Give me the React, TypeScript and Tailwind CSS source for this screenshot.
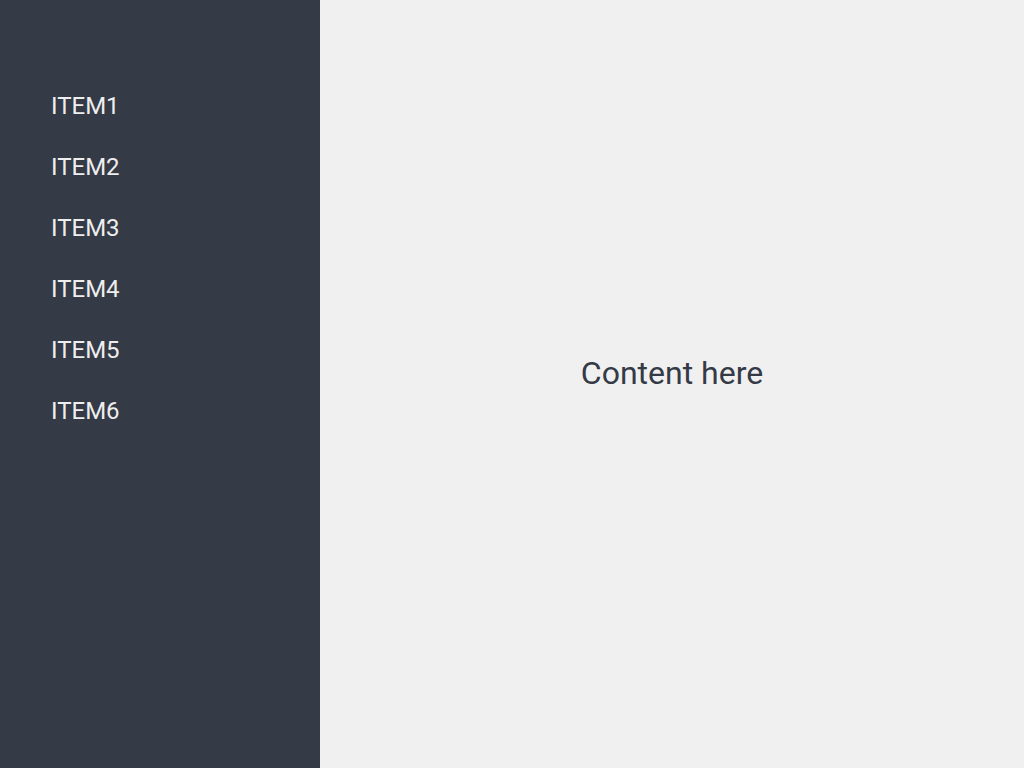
export default function App() {
  const items = ["ITEM1", "ITEM2", "ITEM3", "ITEM4", "ITEM5", "ITEM6"];
  return (
    <div className="flex w-full h-screen font-['Roboto',sans-serif]">
      <aside className="w-[320px] shrink-0 bg-[#343a46] pt-[75px] pl-[51px]">
        <ul className="flex flex-col">
          {items.map((item) => (
            <li key={item} className="h-[61px] flex items-center text-[24px] text-[#eeeeee]">
              {item}
            </li>
          ))}
        </ul>
      </aside>
      <main className="flex-1 bg-[#f0f0f0] flex items-center justify-center">
        <p className="text-[32px] text-[#343a46] -mt-[22px]">Content here</p>
      </main>
    </div>
  );
}
